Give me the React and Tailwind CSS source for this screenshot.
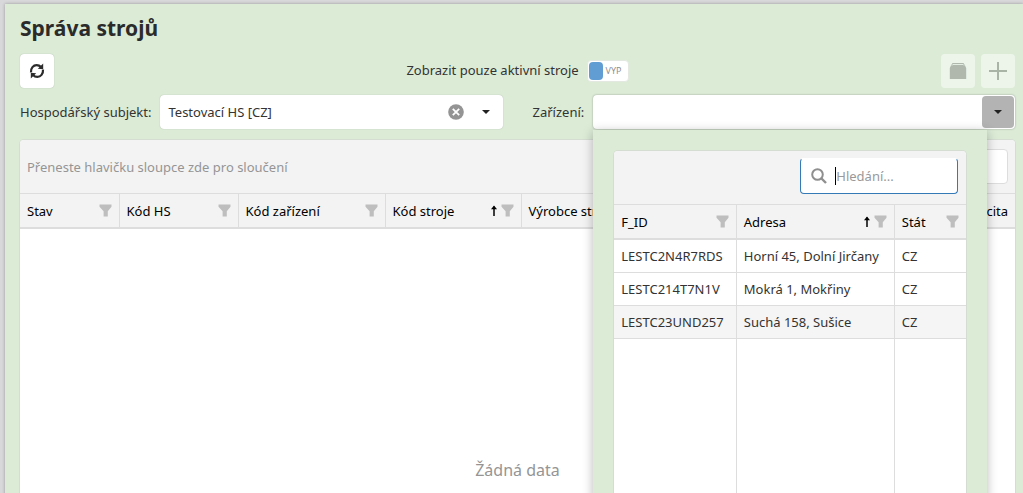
const DEVICES = [
  { id: 'LESTC2N4R7RDS', address: 'Horní 45, Dolní Jirčany', country: 'CZ' },
  { id: 'LESTC214T7N1V', address: 'Mokrá 1, Mokřiny', country: 'CZ' },
  { id: 'LESTC23UND257', address: 'Suchá 158, Sušice', country: 'CZ', active: true },
]

function FilterIcon() {
  return (
    <svg viewBox="0 0 13 13" className="size-[13px] shrink-0 fill-[#bebebe]" aria-hidden="true">
      <path d="M0.5 0.5h12v2.2L8.8 7.2v5.3H4.6V7.2L0.5 2.7z" />
    </svg>
  )
}

function SortUpIcon() {
  return (
    <svg viewBox="0 0 8 12" className="h-3 w-2 shrink-0" aria-hidden="true">
      <path d="M4 1.5V11" fill="none" stroke="#000" strokeWidth="1.5" />
      <path d="M4 0.5L7 4.2H1z" fill="#000" />
    </svg>
  )
}

function RefreshIcon() {
  return (
    <svg viewBox="0 0 16 16" className="size-4" aria-hidden="true">
      <g fill="none" stroke="#2b2b2b" strokeWidth="2.2">
        <path d="M2 9.4C1.6 5 4.4 2.200 7.600 2.200c1.800 0 3.200.6 4.400 1.900" />
        <path d="M14 6.600c.4 4.400-2.400 7.200-5.600 7.200-1.800 0-3.200-.6-4.400-1.900" />
      </g>
      <path d="M14.200 0.6v5.600l-5.400-.4z" fill="#2b2b2b" />
      <path d="M1.800 15.400V9.800l5.400.4z" fill="#2b2b2b" />
    </svg>
  )
}

function CaretIcon() {
  return (
    <svg viewBox="0 0 8 4" className="h-1 w-2" aria-hidden="true">
      <path d="M0 0h8L4 4z" fill="#222" />
    </svg>
  )
}

function HeaderCell({ children, sorted, last, right, noFilter }) {
  return (
    <th scope="col" className={last ? 'p-0 font-normal' : 'border-r border-[#ddd] p-0 font-normal'}>
      <div className="flex h-[33px] items-center overflow-hidden px-[7px] whitespace-nowrap">
        <span className={right ? 'flex-1 text-right' : 'flex-1 text-left'}>{children}</span>
        {sorted && <SortUpIcon />}
        {!noFilter && <span className="ml-[3px]"><FilterIcon /></span>}
      </div>
    </th>
  )
}

function DevicePopup() {
  return (
    <div className="absolute top-full left-0 z-10 mt-px w-[394px] bg-[#dbebd6] px-[21px] pt-[21px] shadow-[0_2px_10px_rgba(0,0,0,0.28)]">
      <div className="overflow-hidden rounded-t bg-white ring-1 ring-[#d5ddd2]">
        <div className="flex h-[53px] justify-end bg-[#f3f3f3] px-2 pt-[7px]">
          <label className="flex h-9 w-[158px] items-center rounded border border-[#337ab7] border-t-white bg-white pl-[10px]">
            <svg viewBox="0 0 16 16" className="size-4 shrink-0" aria-hidden="true">
              <circle cx="6.5" cy="6.5" r="5.3" fill="none" stroke="#8f8f8f" strokeWidth="2" />
              <path d="M10.5 10.5l4.500 4.500" stroke="#8f8f8f" strokeWidth="2.4" />
            </svg>
            <span className="ml-2 h-[18px] w-px shrink-0 bg-black" />
            <input type="search" aria-label="Hledání" placeholder="Hledání..." className="min-w-0 flex-1 bg-transparent caret-transparent outline-none placeholder:text-[#999]" />
          </label>
        </div>
        <table className="w-full table-fixed border-t border-[#ddd]">
          <colgroup>
            <col className="w-[122px]" />
            <col />
            <col className="w-[72px]" />
          </colgroup>
          <thead className="border-b-2 border-[#ddd] bg-[#f3f3f3] text-black">
            <tr>
              <HeaderCell>F_ID</HeaderCell>
              <HeaderCell sorted>Adresa</HeaderCell>
              <HeaderCell last>Stát</HeaderCell>
            </tr>
          </thead>
          <tbody className="whitespace-nowrap">
            {DEVICES.map((d) => (
              <tr key={d.id} className={d.active ? 'h-[33px] border-b border-[#ddd] bg-[#f5f5f5]' : 'h-[33px] border-b border-[#ddd]'}>
                <td className="border-r border-[#ddd] px-[7px] py-0">{d.id}</td>
                <td className="border-r border-[#ddd] px-[7px] py-0">{d.address}</td>
                <td className="px-[7px] py-0">{d.country}</td>
              </tr>
            ))}
            <tr className="h-64">
              <td className="border-r border-[#ddd]" />
              <td className="border-r border-[#ddd]" />
              <td />
            </tr>
          </tbody>
        </table>
      </div>
    </div>
  )
}

function Toolbar() {
  return (
    <div className="grid grid-cols-[1fr_auto_1fr] items-start">
      <div>
        <button type="button" aria-label="Obnovit" className="flex size-[34px] items-center justify-center rounded-sm bg-white shadow-[0_0_1px_rgba(0,0,0,0.3)]">
          <RefreshIcon />
        </button>
      </div>
      <div className="flex items-center gap-2 pt-[6px]">
        <span id="active-only" className="pb-[2px]">Zobrazit pouze aktivní stroje</span>
        <button type="button" role="switch" aria-checked="false" aria-labelledby="active-only" className="flex h-[22px] w-[42px] items-center rounded-sm border border-[#e3e9e1] bg-white pl-px">
          <span className="h-[18px] w-[14px] rounded-sm bg-[#619dd3]" />
          <span className="ml-[3px] text-[9px] text-[#8f8f8f]">VYP</span>
        </button>
      </div>
      <div className="flex justify-end gap-[6px]">
        <button type="button" disabled aria-label="Archivovat" className="flex size-[34px] items-center justify-center rounded-sm bg-[#edf5eb]">
          <svg viewBox="0 0 18 18" className="size-[18px]" aria-hidden="true">
            <path d="M3.5 1h11l1.500 2.500 1.200 2.500v11H.8V6L2 3.500z" fill="#b0b8ad" />
            <path d="M3 3.500l.8-1h10.400l.8 1" fill="none" stroke="#e4ede1" strokeWidth="1" />
          </svg>
        </button>
        <button type="button" disabled aria-label="Přidat" className="flex size-[34px] items-center justify-center rounded-sm bg-[#edf5eb]">
          <svg viewBox="0 0 18 18" className="size-[18px]" aria-hidden="true">
            <path d="M9 0v18M0 9h18" stroke="#a9b3a6" strokeWidth="2" />
          </svg>
        </button>
      </div>
    </div>
  )
}

export default function App() {
  return (
    <div className="h-screen overflow-hidden bg-[#d8d8da] pt-1 pl-[5px] font-['Noto_Sans','Open_Sans',sans-serif] text-[13px] leading-5 text-[#333]">
      <main className="min-h-full bg-[#dbebd6] pt-[9px] pr-2 pl-[15px] shadow-[0_0_3px_rgba(0,0,0,0.3)]">
        <h1 className="mb-[11px] text-[21px] leading-[30px] font-bold text-[#2b2b2b]">Správa strojů</h1>
        <Toolbar />

        <div className="mt-[7px] grid grid-cols-2 gap-[30px]">
          <div className="flex items-center gap-[9px]">
            <label htmlFor="subject" className="whitespace-nowrap">Hospodářský subjekt:</label>
            <div className="flex h-[34px] min-w-0 flex-1 items-center rounded-sm bg-white pr-[13px] pl-2 shadow-[0_0_1px_rgba(0,0,0,0.3)]">
              <input id="subject" type="text" defaultValue="Testovací HS [CZ]" className="min-w-0 flex-1 bg-transparent outline-none" />
              <button type="button" aria-label="Vymazat">
                <svg viewBox="0 0 16 16" className="size-4" aria-hidden="true">
                  <circle cx="8" cy="8" r="7.8" fill="#949494" />
                  <path d="M4.800 4.800l6.400 6.400M11.200 4.800l-6.400 6.400" stroke="#fff" strokeWidth="1.8" />
                </svg>
              </button>
              <button type="button" aria-label="Vybrat subjekt" className="ml-[18px]"><CaretIcon /></button>
            </div>
          </div>
          <div className="flex items-center gap-[9px]">
            <label htmlFor="device" className="whitespace-nowrap">Zařízení:</label>
            <div className="relative flex h-[34px] min-w-0 flex-1 items-center rounded-sm bg-white p-px shadow-[0_0_2px_rgba(0,0,0,0.35)]">
              <input id="device" type="text" className="h-full min-w-0 flex-1 bg-transparent px-2 outline-none" />
              <button type="button" aria-label="Vybrat zařízení" className="flex h-8 w-8 items-center justify-center rounded-sm bg-[#b3b3b3]"><CaretIcon /></button>
              <DevicePopup />
            </div>
          </div>
        </div>

        <section className="mt-[11px] overflow-hidden rounded-t bg-white ring-1 ring-[#d5ddd2]">
          <div className="flex h-[53px] items-center justify-between bg-[#f3f3f3] px-[7px] text-[#959595]">
            <span>Přeneste hlavičku sloupce zde pro sloučení</span>
            <input type="search" aria-label="Hledání v tabulce" className="h-[35px] w-40 rounded border border-[#ddd] bg-white" />
          </div>
          <table className="w-full table-fixed border-t border-[#ddd]">
            <colgroup>
              <col className="w-[99px]" />
              <col className="w-[119px]" />
              <col className="w-[147px]" />
              <col className="w-[136px]" />
              <col />
              <col />
            </colgroup>
            <thead className="border-b-2 border-[#ddd] bg-[#f3f3f3] text-black">
              <tr>
                <HeaderCell>Stav</HeaderCell>
                <HeaderCell>Kód HS</HeaderCell>
                <HeaderCell>Kód zařízení</HeaderCell>
                <HeaderCell sorted>Kód stroje</HeaderCell>
                <HeaderCell>Výrobce stroje</HeaderCell>
                <HeaderCell last right noFilter>Kapacita</HeaderCell>
              </tr>
            </thead>
          </table>
          <div className="flex h-[482px] items-center justify-center text-[16px] text-[#959595]">Žádná data</div>
        </section>
      </main>
    </div>
  )
}
